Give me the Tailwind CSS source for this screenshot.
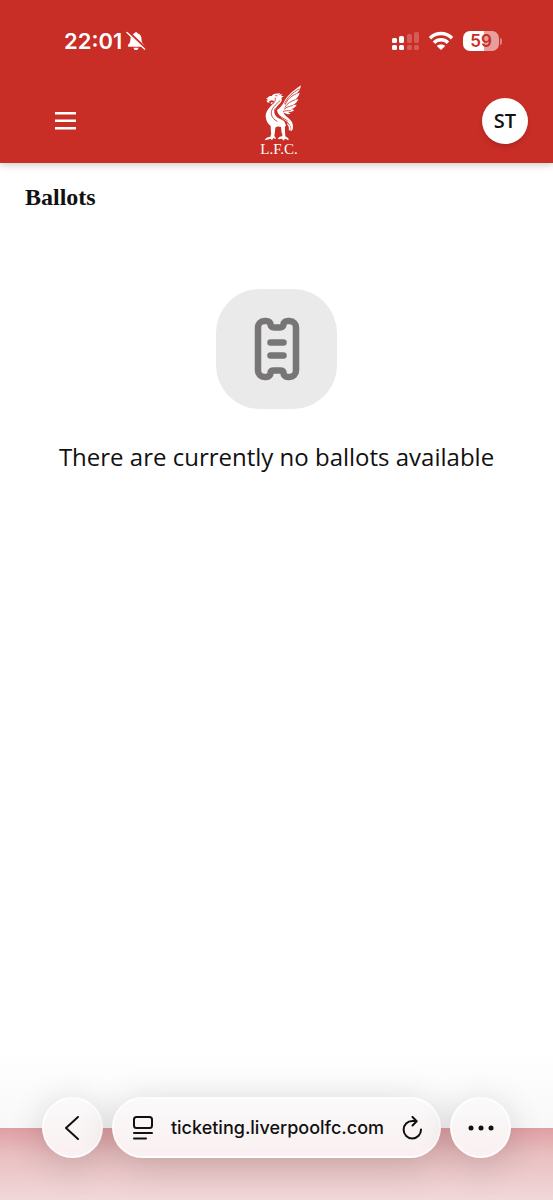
<!DOCTYPE html>
<html lang="en">
<head>
    <meta charset="UTF-8">
    <meta name="viewport" content="width=device-width, initial-scale=1">
    <title>Ballots</title>
    <script src="https://cdn.jsdelivr.net/npm/@tailwindcss/browser@4"></script>
</head>
<body class="min-h-screen flex flex-col bg-white text-[#111111] font-['Open_Sans','Noto_Sans',sans-serif]">

    <!-- Header -->
    <header class="bg-[#c82d26] text-white shadow-[0_1px_8px_rgba(0,0,0,0.25)]">
        <!-- Status bar -->
        <div class="flex items-center justify-between h-20 pt-0.5 pl-16 pr-[51px]">
            <div class="flex items-center gap-1">
                <span class="font-['Inter',sans-serif] font-semibold text-[22px] leading-6">22:01</span>
                <svg class="w-5 h-5" viewBox="0 0 20 20" fill="none">
                    <path d="M10 1.200c-.9 0-1.600.6-1.800 1.400C5.600 3.400 4.600 5.500 4.500 8c-.1 3.300-1 4.500-2.300 5.700-.8.8-.4 2 .7 2h14.200c1.100 0 1.500-1.200.7-2C16.500 12.500 15.600 11.300 15.500 8c-.1-2.500-1.100-4.600-3.700-5.400-.2-.8-.9-1.400-1.800-1.400Z" fill="currentColor"/>
                    <path d="M7.500 16.700h5c-.2 1.500-1.200 2.300-2.500 2.300s-2.300-.8-2.500-2.300Z" fill="currentColor"/>
                    <path d="M2.200 1.200 19.500 17.500" stroke="#c82d26" stroke-width="3"/>
                    <path d="M1 1.500 18.500 18" stroke="currentColor" stroke-width="1.500" stroke-linecap="round"/>
                </svg>
            </div>
            <div class="flex items-center gap-2.5">
                <svg class="w-7 h-5" viewBox="0 0 28 20" fill="currentColor">
                    <rect x="1" y="7" width="5" height="5" rx="1.500"/>
                    <rect x="8" y="5" width="5" height="7" rx="1.500"/>
                    <rect x="1" y="14" width="5" height="5" rx="1.500"/>
                    <rect x="8" y="14" width="5" height="5" rx="1.500"/>
                    <g opacity=".22">
                        <rect x="16" y="3" width="5" height="9" rx="1.500"/>
                        <rect x="23" y="1" width="5" height="11" rx="1.500"/>
                        <rect x="16" y="14" width="5" height="5" rx="1.500"/>
                        <rect x="23" y="14" width="5" height="5" rx="1.500"/>
                    </g>
                </svg>
                <svg class="w-6 h-5" viewBox="0 0 24 20" fill="none" stroke="currentColor" stroke-width="3.500">
                    <path d="M1 7.200a15.500 15.500 0 0 1 22 0"/>
                    <path d="M5 11.800a9.800 9.800 0 0 1 14 0"/>
                    <path d="M12 19 7.800 15c2.200-1.900 6.200-1.900 8.400 0Z" fill="currentColor" stroke="none"/>
                </svg>
                <div class="flex items-center gap-px">
                    <span class="w-9 h-5 rounded-[7px] bg-linear-to-r from-white from-59% to-[#e79f9c] to-59% text-[#c82d26] text-center font-['Inter',sans-serif] font-semibold text-[17px] leading-5">59</span>
                    <span class="w-0.5 h-[7px] rounded-r bg-white/40"></span>
                </div>
            </div>
        </div>

        <!-- Navigation -->
        <nav class="flex items-center justify-between h-[83px] pb-0.5 pl-[54px] pr-[25px]">
            <button type="button" aria-label="Menu">
                <svg class="w-[22px] h-[22px]" viewBox="0 0 22 22" fill="currentColor">
                    <path d="M1 2h21v2.500H1zM1 9.500h21V12H1zM1 17h21v2.500H1z"/>
                </svg>
            </button>
            <a href="#" class="flex flex-col items-center">
                <svg class="w-[45px] h-[57px]" viewBox="51 27 135 171" fill="currentColor" aria-hidden="true">
                    <!-- head, neck and body -->
                    <path d="M82 68c5-4 9-5 13-5 3-5 10-8 18-7l7-3-3 6 10-2-4 6 9 1-8 4c3 6 1 12-4 17-8 8-15 15-16 25 0 10 6 17 15 20 8 3 13 6 15 11l4 11-4 4-1 18-8 1-2-19c-5-2-9-2-13-1l-8 6-1 14h-8l-1-22c-8-6-14-16-15-28 0-16 10-26 19-36 4-4 7-8 5-12l-8-1-9 6 1-6-7 1 6-5-7-1 8-3Z"/>
                    <path d="M81 77c5 0 7-3 12-2l-7 5 4 3-9-1ZM92 83l6-2-1 6-5-1Z"/>
                    <!-- wing feathers -->
                    <path d="M111 105c9-6 15-13 21-24 7-15 24-32 51-50-2 12-7 20-16 27l12-5c-2 10-8 17-16 22l12-3c-3 9-9 15-17 18l12-1c-4 8-10 12-18 13l11 3c-5 5-12 7-20 5l9 6c-7 3-16 1-22-4 2 7 8 12 16 18 9 7 14 16 13 30-2 6-4 9-6 8 2-12-3-20-12-28-14-9-28-18-30-35Z"/>
                    <path d="M142 143c7 6 12 14 10 25l-6-4c2-6 0-12-6-17Z"/>
                    <!-- legs and claws -->
                    <path d="m98 160 8-1-3 25c3 2 5 5 4 9l-6-4-6 7-2-5-12 3-7 2c2-7 8-10 17-11ZM126 157l8-1 2 28 8 5c2 2 2 5 1 7l-9-5-7 6-2-6-13 2c0-6 6-8 13-9Z"/>
                    <!-- gaps between feathers -->
                    <g fill="none" stroke="#c82d26" stroke-width="2.500" stroke-linecap="round">
                        <path d="M168 57c-15 6-25 15-32 31M164 75c-12 4-21 9-29 21M158 92c-10 1-18 4-25 10M151 107c-8 0-14 0-21 2"/>
                        <path d="M177 42c-21 12-34 24-43 43M120 77c-14 13-27 23-26 39 1 11 8 18 17 23M105 101c-4 13 2 23 14 29 10 5 20 9 26 17"/>
                        <path d="M111 114c6 12 22 16 31 23M106 69c2 7-3 13-8 18M107 62h4"/>
                    </g>
                </svg>
                <span class="font-['Liberation_Serif',serif] text-[15px] leading-4">L.F.C.</span>
            </a>
            <button type="button" class="w-[46px] h-[46px] rounded-full bg-white text-[#111111] text-xl font-semibold shadow-md" aria-label="Account ST">ST</button>
        </nav>
    </header>

    <!-- Content -->
    <main class="flex-1">
        <h1 class="px-[25px] pt-4 font-['Liberation_Serif',serif] font-bold text-2xl leading-9">Ballots</h1>

        <div class="flex flex-col items-center gap-8 mt-[74px] px-6">
            <div class="w-[121px] h-[120px] rounded-[44px] bg-[#eaeaea] text-[#777575] flex items-center justify-center">
                <svg class="w-[46px] h-16" viewBox="0 0 46 64" fill="none" stroke="currentColor" stroke-width="6.500" stroke-linecap="round" stroke-linejoin="round">
                    <path d="M10.500 4H12c3 0 4.500 1.500 4.500 3.500S18 10.500 20 10.500h6c2 0 3.500-1 3.500-3S31 4 34 4h1.500c4 0 6.500 3 6.500 6.500v43c0 4-3 6.500-6.500 6.500H34c-3 0-4.500-2-4.500-4s-1.500-2.500-3.500-2.500h-6c-2 0-3.500.5-3.500 2.500S15 60 12 60h-1.500C7 60 4 57.500 4 53.500v-43C4 7 6.500 4 10.500 4Z"/>
                    <path d="M16.500 25.500h13M16.500 38.500h13"/>
                </svg>
            </div>
            <p class="text-2xl text-center">There are currently no ballots available</p>
        </div>
    </main>

    <!-- Browser toolbar -->
    <footer class="sticky bottom-0 flex items-start gap-[9px] h-[150px] pt-[47px] px-[42px] bg-[linear-gradient(to_bottom,#ffffff,#f8f8f8_78px,#df9fa2_78px,#e9bfc1_105px,#f1d8d8)] font-['Inter',sans-serif]">
        <button type="button" class="w-[61px] h-[61px] shrink-0 rounded-full border-2 border-white/70 bg-linear-to-b from-[#fafafa] to-[#faf0f1] shadow-[0_6px_36px_rgba(0,0,0,0.16)] flex items-center justify-center" aria-label="Back">
            <svg class="w-6 h-6" viewBox="0 0 24 24" fill="none" stroke="currentColor" stroke-width="2" stroke-linecap="round" stroke-linejoin="round">
                <path d="M17 1 5 12l12 11"/>
            </svg>
        </button>
        <div class="flex-1 min-w-0 h-[61px] rounded-full border-2 border-white/70 bg-linear-to-b from-[#fafafa] to-[#faf0f1] shadow-[0_6px_36px_rgba(0,0,0,0.16)] flex items-center pl-[18px] pr-4">
            <button type="button" aria-label="Page options">
                <svg class="w-[22px] h-6" viewBox="0 0 22 24" fill="none" stroke="currentColor" stroke-width="2" stroke-linecap="round">
                    <rect x="2" y="1" width="18" height="11" rx="2.500"/>
                    <path d="M2 17h18M2 22.500h12"/>
                </svg>
            </button>
            <input type="text" value="ticketing.liverpoolfc.com" aria-label="Address" class="flex-1 min-w-0 bg-transparent text-center text-lg font-medium outline-none">
            <button type="button" aria-label="Reload">
                <svg class="w-[22px] h-6" viewBox="0 0 22 24" fill="none" stroke="currentColor" stroke-width="2" stroke-linecap="round" stroke-linejoin="round">
                    <path d="M20 13.500A8.700 8.700 0 1 1 11.300 5H15.500M11.500 1l4.200 4.200L11.500 9.500"/>
                </svg>
            </button>
        </div>
        <button type="button" class="w-[61px] h-[61px] shrink-0 rounded-full border-2 border-white/70 bg-linear-to-b from-[#fafafa] to-[#faf0f1] shadow-[0_6px_36px_rgba(0,0,0,0.16)] flex items-center justify-center" aria-label="More">
            <svg class="w-[26px] h-2" viewBox="0 0 26 8" fill="currentColor">
                <circle cx="3" cy="4" r="2.500"/>
                <circle cx="13" cy="4" r="2.500"/>
                <circle cx="23" cy="4" r="2.500"/>
            </svg>
        </button>
    </footer>

</body>
</html>
